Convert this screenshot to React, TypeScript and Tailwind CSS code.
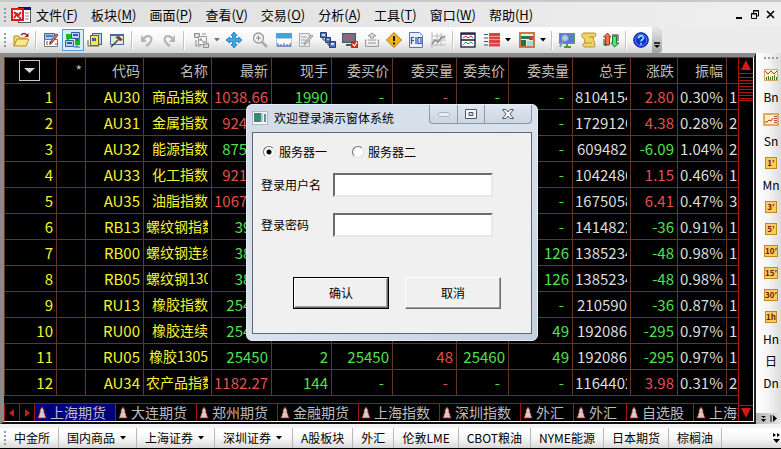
import { useState, type ReactNode } from 'react';
import clsx from 'clsx';

const COLUMNS = [
  { key: 'no', title: '', width: 'w-[52px]' },
  { key: 'mark', title: '*', width: 'w-[29px]' },
  { key: 'code', title: '代码', width: 'w-[58px]' },
  { key: 'name', title: '名称', width: 'w-[68px]' },
  { key: 'last', title: '最新', width: 'w-[60px]' },
  { key: 'hand', title: '现手', width: 'w-[60px]' },
  { key: 'bid', title: '委买价', width: 'w-[61px]' },
  { key: 'bidVol', title: '委买量', width: 'w-[64px]' },
  { key: 'ask', title: '委卖价', width: 'w-[52px]' },
  { key: 'askVol', title: '委卖量', width: 'w-[64px]' },
  { key: 'total', title: '总手', width: 'w-[58px]' },
  { key: 'change', title: '涨跌', width: 'w-[47px]' },
  { key: 'swing', title: '振幅', width: 'w-[49px]' },
  { key: 'more', title: '', width: '' },
];

// code, name, last, hand, bid, bidVol, ask, askVol, total, change, swing, more
const ROWS: string[][] = [
  ['AU30', '商品指数', '1038.66', '1990', '-', '-', '-', '-', '8104154', '2.80', '0.30%', '1'],
  ['AU31', '金属指数', '924.35', '512', '-', '-', '-', '-', '1729126', '4.38', '0.28%', '2'],
  ['AU32', '能源指数', '875.20', '96', '-', '-', '-', '-', '609482', '-6.09', '1.04%', '2'],
  ['AU33', '化工指数', '921.48', '388', '-', '-', '-', '-', '1042486', '1.15', '0.46%', '1'],
  ['AU35', '油脂指数', '1067.14', '260', '-', '-', '-', '-', '1675058', '6.41', '0.47%', '3'],
  ['RB13', '螺纹钢指数', '3958', '18', '-', '-', '-', '-', '1414822', '-36', '0.91%', '1'],
  ['RB00', '螺纹钢连续', '3886', '18', '3885', '60', '3886', '126', '1385234', '-48', '0.98%', '1'],
  ['RB05', '螺纹钢1305', '3886', '18', '3885', '60', '3886', '126', '1385234', '-48', '0.98%', '1'],
  ['RU13', '橡胶指数', '25486', '2', '-', '-', '-', '-', '210590', '-36', '0.87%', '1'],
  ['RU00', '橡胶连续', '25450', '2', '25450', '48', '25460', '49', '192086', '-295', '0.97%', '1'],
  ['RU05', '橡胶1305', '25450', '2', '25450', '48', '25460', '49', '192086', '-295', '0.97%', '1'],
  ['AU34', '农产品指数', '1182.27', '144', '-', '-', '-', '-', '1164402', '3.98', '0.31%', '2'],
];

const MENUS = [
  ['文件', 'F'],
  ['板块', 'M'],
  ['画面', 'P'],
  ['查看', 'V'],
  ['交易', 'O'],
  ['分析', 'A'],
  ['工具', 'T'],
  ['窗口', 'W'],
  ['帮助', 'H'],
];

const TABS = ['上海期货', '大连期货', '郑州期货', '金融期货', '上海指数', '深圳指数', '外汇', '外汇', '自选股', '上海期权'];

const MARKETS = [
  { name: '中金所' },
  { name: '国内商品', menu: true },
  { name: '上海证券', menu: true },
  { name: '深圳证券', menu: true },
  { name: 'A股板块' },
  { name: '外汇' },
  { name: '伦敦LME' },
  { name: 'CBOT粮油' },
  { name: 'NYME能源' },
  { name: '日本期货' },
  { name: '棕榈油' },
];

const PERIODS = ['Bn', 'trend', 'Sn', '1′', 'Mn', '3′', '5′', '10′', '15′', '30′', '1h', 'Hn', '日', 'Dn'];

function cellColor(key: string, value: string, up: boolean) {
  if (key === 'code' || key === 'name') return 'text-[#f4f42c]';
  if (key === 'total' || key === 'swing' || key === 'more') return 'text-[#dcdcdc]';
  if (key === 'bidVol') return 'text-[#e05050]';
  if (key === 'change') return value.startsWith('-') ? 'text-[#50e050]' : 'text-[#e05050]';
  if (key === 'last') return up ? 'text-[#e05050]' : 'text-[#50e050]';
  return 'text-[#50e050]';
}

export default function App() {
  return (
    <div className="relative w-full overflow-hidden bg-[#ececec] font-['Noto_Sans_CJK_SC',sans-serif] text-black">
      <MenuBar />
      <Toolbar />
      <div className="flex">
        <main className="min-w-0 flex-1 border-t-4 border-r-2 border-b-2 border-l-4 border-t-[#8a8a8a] border-r-[#222] border-b-[#111] border-l-[#8a8a8a] bg-white pr-px pb-px">
          <div className="flex bg-black">
            <div className="min-w-0 flex-1">
              <QuoteTable />
              <SectorTabs />
            </div>
            <ScrollStrip />
          </div>
        </main>
        <PeriodBar />
      </div>
      <MarketBar />
      <LoginDialog />
    </div>
  );
}

function MenuBar() {
  return (
    <header className="flex h-[27px] items-center border-t-2 border-[#c8c8c8] bg-linear-to-r from-[#dedede] to-[#efefef] pr-[6px] pl-1 text-[13px] leading-5">
      <Grip />
      <svg className="mr-[5px] ml-1 shrink-0" width="20" height="18" viewBox="0 0 20 18" aria-hidden="true">
        <rect x="7.5" y="1.5" width="12" height="15" fill="#fff" stroke="#555" />
        <rect x="7" y="1" width="13" height="3" fill="#101080" />
        <path d="M14 7h4M14 10h4M14 13h4" stroke="#888" />
        <rect x="1" y="3" width="11" height="11" fill="#fff" stroke="#d81c1c" strokeWidth="2" />
        <path d="M3 12l3-4 1 2 3-4M3 6l2 2M8 11l2 2" stroke="#d81c1c" strokeWidth="2" fill="none" />
      </svg>
      <nav className="flex gap-[13px]">
        {MENUS.map(([name, hotkey]) => (
          <button key={name} className="whitespace-nowrap">
            {name}(<span className="underline underline-offset-2">{hotkey}</span>)
          </button>
        ))}
      </nav>
      <div className="ml-auto flex items-center gap-[6px]">
        <button aria-label="最小化">
          <svg width="9" height="9" viewBox="0 0 9 9">
            <path d="M1 8h6" stroke="#000" strokeWidth="2" />
          </svg>
        </button>
        <button aria-label="还原">
          <svg width="10" height="9" viewBox="0 0 10 9" fill="none" stroke="#000">
            <path d="M3.500 3V.5h5V6H7M3 1h6M1 4h6" />
            <path d="M1.500 3.500h5v5h-5z" />
          </svg>
        </button>
        <button aria-label="关闭">
          <svg width="9" height="9" viewBox="0 0 9 9">
            <path d="M1 1l7 7M8 1L1 8" stroke="#000" strokeWidth="1.600" />
          </svg>
        </button>
      </div>
    </header>
  );
}

function Grip() {
  return (
    <svg className="shrink-0" width="3" height="14" viewBox="0 0 3 14" aria-hidden="true">
      <path d="M0 1h2M0 5h2M0 9h2M0 13h2" stroke="#9a9a9a" strokeWidth="2" />
    </svg>
  );
}

function Tool({ label, active, children }: { label: string; active?: boolean; children: ReactNode }) {
  return (
    <button
      aria-label={label}
      className={clsx(
        'flex size-[22px] shrink-0 items-center justify-center',
        active && 'border border-[#4f9be0] bg-[#d9ecfb]'
      )}
    >
      <svg className="shrink-0" width="16" height="16" viewBox="0 0 16 16" fill="none">
        {children}
      </svg>
    </button>
  );
}

function Divider() {
  return <span className="mx-[3px] h-[19px] w-[2px] shrink-0 border-r border-white bg-[#c4c4c4]" />;
}

function Drop({ dim }: { dim?: boolean }) {
  return (
    <svg className="shrink-0" width="10" height="6" viewBox="0 0 10 6" aria-hidden="true">
      <path d="M2 1h6L5 4.500z" fill={dim ? '#777' : '#000'} />
    </svg>
  );
}

function Toolbar() {
  return (
    <div className="flex h-[26px]">
      <div className="flex items-center bg-linear-to-b from-white via-[#f6f6f6] to-[#d6d6d6] pl-1" role="toolbar">
        <Grip />
        <span className="w-[3px]" />
        <Tool label="打开">
          <path d="M1 14V4h5l1 2h6v2" fill="#f6dc6c" stroke="#b98a1c" />
          <path d="M1 14l3-7h12l-3 7z" fill="#fbe88c" stroke="#b98a1c" />
          <path d="M8 3c2-2 4-2 6 0" stroke="#9c2020" strokeWidth="1.300" />
          <path d="M15.500 1v4h-4z" fill="#9c2020" />
        </Tool>
        <Divider />
        <Tool label="编辑板块">
          <path d="M1.500 1.500h10v6h-10z" fill="#a8c8ec" stroke="#44608c" />
          <path d="M3 3h7v2H3z" fill="#4c80c4" />
          <path d="M1.500 7.500h13v7h-13z" fill="#fff" stroke="#777" />
          <path d="M3 10h2M3 12h2M6 10h2M6 12h2M12 12h2" stroke="#555" />
          <path d="M15 3l-6 8-2 1 .5-2L13 2z" fill="#d88478" stroke="#8c3434" />
        </Tool>
        <Tool label="多窗口" active>
          <path d="M1 2h5v5H1zM10 7h5v6h-5z" fill="#18b828" />
          <path d="M3 7v4h4M9 6h3v3" stroke="#147820" strokeWidth="1.500" />
          <path d="M6.500.500h8v6h-8zM.5 8.500h8v6h-8z" fill="#b8d4f4" stroke="#3c5c9c" />
          <path d="M8 3h5M2 11h5" stroke="#3c5c9c" strokeWidth="2" />
          <path d="M9 15h6M12 13v2" stroke="#3c5c9c" />
        </Tool>
        <Tool label="页面">
          <rect x="5.500" y="1.500" width="9" height="11" fill="#bcd0f0" stroke="#4a5f8c" />
          <rect x="3.500" y="3.500" width="8" height="10" fill="#f2e45c" stroke="#6c6420" />
          <rect x="5" y="6" width="4" height="3" fill="#3c64a8" />
          <path d="M1 8v6h11" stroke="#666" />
        </Tool>
        <Tool label="画面工具">
          <rect x="1.500" y="2.500" width="13" height="10" fill="#e4ecd4" stroke="#4a6a9c" />
          <path d="M1 3h14" stroke="#4a6a9c" strokeWidth="2" />
          <path d="M6 5l4-1 4 4-3 1z" fill="#7c3838" />
          <path d="M9 8l-7 7" stroke="#444" strokeWidth="1.500" />
        </Tool>
        <Divider />
        <Tool label="撤销">
          <path d="M4 7c4-5 10-3 8 2-1 2-3 4-5 5" stroke="#b4b4b4" strokeWidth="2.200" />
          <path d="M2 3v7h6z" fill="#b4b4b4" />
        </Tool>
        <Tool label="重做">
          <path d="M12 7C8 2 2 4 4 9c1 2 3 4 5 5" stroke="#b4b4b4" strokeWidth="2.200" />
          <path d="M14 3v7H8z" fill="#b4b4b4" />
        </Tool>
        <Divider />
        <span className="w-[2px]" />
        <Tool label="布局">
          <path d="M1.500 1.500h5v4h-5zM10.500 11.500h5v4h-5z" fill="#ddd" stroke="#8c8c8c" />
          <path d="M5.500 4.500h8v8h-8z" fill="#f4f4f4" stroke="#999" />
          <path d="M7 7l5 4M7 9V7h2M12 9v2h-2M3 8v6h5M9 2h4" stroke="#8c8c8c" />
        </Tool>
        <Drop dim />
        <span className="w-px" />
        <Tool label="移动">
          <path
            d="M8 0l3 3.500H9.500v3h3V5L16 8l-3.500 3V9.500h-3v3H11L8 16l-3-3.500h1.500v-3h-3V11L0 8l3.500-3v1.500h3v-3H5z"
            fill="#3cabe8"
            stroke="#1c74b4"
            strokeWidth=".8"
          />
        </Tool>
        <span className="w-1" />
        <Tool label="放大">
          <circle cx="6.500" cy="6" r="5" fill="#f4f4f4" stroke="#999" strokeWidth="1.300" />
          <path d="M4 6h5M6.500 3.500v5" stroke="#888" />
          <path d="M10 10l5 5" stroke="#aaa" strokeWidth="2.500" />
        </Tool>
        <span className="w-[2px]" />
        <Tool label="标尺">
          <rect x="0" y="1" width="16" height="5" fill="#38a8e0" />
          <rect x=".5" y="6.500" width="15" height="8" fill="#fff" stroke="#b8c4e0" />
          <path d="M1 14h14M2 11v3M5 12v2M8 11v3M11 12v2M14 11v3" stroke="#4058b0" />
        </Tool>
        <Tool label="备注">
          <path d="M1.500 1.500h10v13h-10z" fill="#ececec" stroke="#aaa" />
          <path d="M3 5h6M3 8h5M3 11h4" stroke="#aaa" />
          <path d="M15 4l-7 8-2 1 1-3 6-7z" fill="#ccc" stroke="#999" />
        </Tool>
        <Tool label="层叠">
          <path d="M.5.500h6v5h-6zM5.500 5.500h5v5h-5zM9.500 9.500h6v6h-6z" fill="#4c74c8" stroke="#283c78" />
          <path d="M2 2h3v2H2zM7 7h2v1H7zM11 11h3v2h-3z" fill="#c8dcfc" />
          <path d="M3 6v2h2M8 11v2h1" stroke="#444" />
        </Tool>
        <Tool label="行情监控">
          <rect x=".5" y="1.500" width="13" height="9" fill="#6c7488" stroke="#4c5468" />
          <path d="M2 8l3-2 2 1 2-3 4-1" stroke="#e84848" />
          <path d="M4 13h5" stroke="#555" strokeWidth="2" />
          <rect x="9" y="9" width="7" height="7" fill="#e02020" />
          <path d="M10.500 12l2 2 2.500-4" stroke="#fff" strokeWidth="1.200" />
        </Tool>
        <Tool label="上传">
          <path d="M4 4l4-3 4 3H9.500v2h-3V4z" fill="#ddd" stroke="#999" />
          <path d="M3 8H1.500v6.500h13V8H13M4 8h8M4 11h8" stroke="#999" />
        </Tool>
        <Tool label="预警">
          <path d="M8 .5L15.500 8 8 15.500.5 8z" fill="#f4b41c" stroke="#a87410" />
          <path d="M8 4v5M8 10.500v2" stroke="#221800" strokeWidth="2" />
        </Tool>
        <Tool label="F10资料">
          <path d="M1.500.500h10l3 3v12h-13z" fill="#e8f0fc" stroke="#5c74b0" />
          <path d="M3.500 12V5.500H6M3.500 8.500H6M8 5v7M10 5.500h3v6h-3z" stroke="#2c4ca8" strokeWidth="1.200" />
        </Tool>
        <Tool label="走势对比">
          <path d="M2 0v16M0 13h16M2 4h14M2 8h14M7 1v13M11 1v13" stroke="#bbb" />
          <path d="M2 12l3-4 3 2 3-4 4-1" stroke="#888" strokeWidth="1.500" />
        </Tool>
        <Divider />
        <Tool label="分时图">
          <rect x="1" y="1" width="14" height="14" fill="#fff" stroke="#14143c" strokeWidth="1.300" />
          <path d="M1 2h14M1 8h14" stroke="#14143c" strokeWidth="1.500" />
          <path d="M3 6l3-2 2 2 3-2 2 2" stroke="#d02828" />
          <path d="M3 13l3-3 2 2 3-2 2 2" stroke="#28a048" />
        </Tool>
        <span className="w-[2px]" />
        <Tool label="报价列表">
          <path d="M5 2.500h11M5 6h11M5 9.500h11M5 13h11" stroke="#d84444" strokeWidth="3" />
          <path d="M0 2.500h4M0 6h4M0 9.500h4M0 13h4" stroke="#44507c" />
        </Tool>
        <Drop />
        <span className="w-[3px]" />
        <Tool label="版面">
          <rect x="1" y="1" width="14" height="14" fill="#f8e8dc" stroke="#c47c4c" strokeWidth="2" />
          <path d="M2 4h8v3H2z" fill="#1c7c4c" />
          <path d="M10 4h4v4h-4z" fill="#c83838" />
          <path d="M2 8h5v6H2z" fill="#286c60" />
          <path d="M8 9h6v5H8z" fill="#a4d4f0" />
        </Tool>
        <Drop />
        <Divider />
        <Tool label="远程">
          <rect x=".5" y="1.500" width="15" height="10" fill="#5c78d8" stroke="#54a454" />
          <path d="M5 15h7M8 12v3" stroke="#48984c" strokeWidth="2" />
          <circle cx="6" cy="6" r="3.500" fill="#b4c8ec" stroke="#7888a8" />
          <path d="M4 9l-3 6" stroke="#8898b0" strokeWidth="2" />
        </Tool>
        <Tool label="脚本">
          <path d="M3 1h10c3 0 2 4 0 4h-1l2 9c0 1-1 1-2 1H4c-3 0-3-4 0-4L3 6C0 6 0 1 3 1z" fill="#f0d468" stroke="#b49430" />
          <path d="M4 11h7M12 5H8" stroke="#b49430" />
        </Tool>
        <Tool label="买卖">
          <path d="M4.500 1L8 5H6.500v8h-4V5H.5z" fill="#f07448" stroke="#a03818" />
          <path d="M11.500 15L8 11h1.500V4h4v7H16z" fill="#58e07c" stroke="#187834" />
          <path d="M1 7v6h3M9 3h6v6" stroke="#333" />
        </Tool>
        <Divider />
        <Tool label="帮助">
          <circle cx="8" cy="8" r="7.300" fill="#1030d8" stroke="#0818a0" />
          <circle cx="8" cy="8" r="5.800" stroke="#88a4fc" strokeWidth=".7" />
          <path d="M5.500 6.500c0-3.500 5-3.500 5-.5 0 1.500-2.500 1.500-2.500 3.500M8 11v1.800" stroke="#8ce8f8" strokeWidth="1.700" />
        </Tool>
        <button
          aria-label="工具栏选项"
          className="flex h-full w-[10px] items-end justify-center rounded-r-sm bg-linear-to-b from-[#e8e8e8] to-[#a4a4a4] pb-1"
        >
          <svg width="6" height="7" viewBox="0 0 6 7">
            <path d="M0 1h6" stroke="#000" strokeWidth="1.500" />
            <path d="M0 3h6L3 6z" fill="#000" />
          </svg>
        </button>
      </div>
    </div>
  );
}

function QuoteTable() {
  return (
    <table className="w-full table-fixed border-separate border-spacing-0 border-t border-l border-[#643624] text-right text-[15px] leading-[25px]">
      <colgroup>
        {COLUMNS.map((col) => (
          <col key={col.key} className={col.width} />
        ))}
      </colgroup>
      <thead>
        <tr className="h-[26px] text-[14px] text-[#bcbcbc]">
          {COLUMNS.map((col) => (
            <th
              key={col.key}
              className="border-r border-b border-[#643624] p-0 pr-[3px] font-normal whitespace-nowrap last:border-r-0"
            >
              {col.key === 'no' ? (
                <button
                  aria-label="选择板块"
                  className="mx-auto flex size-[21px] items-center justify-center border border-[#c8c8c8]"
                >
                  <svg width="11" height="6" viewBox="0 0 11 6">
                    <path d="M0 0h11L5.500 5z" fill="#d8d8d8" />
                  </svg>
                </button>
              ) : (
                col.title
              )}
            </th>
          ))}
        </tr>
      </thead>
      <tbody>
        {ROWS.map((row, i) => {
          const up = row[2].includes('.') && row[0] !== 'AU32';
          return (
            <tr key={row[0]} className="h-[26px]">
              <td className="border-r border-b border-[#643624] p-0 pr-[3px] text-[#f4f42c]">{i + 1}</td>
              <td className="border-r border-b border-[#643624] p-0" />
              {row.map((value, j) => {
                const key = COLUMNS[j + 2].key;
                return (
                  <td
                    key={key}
                    className={clsx(
                      'border-b border-[#643624] p-0 pl-[2px]',
                      key === 'more' ? 'text-left' : 'border-r',
                      key !== 'more' && (value === '-' ? 'pr-2' : 'pr-[3px]'),
                      key === 'name' && 'text-[14px]',
                      cellColor(key, value, up)
                    )}
                  >
                    <div className="overflow-hidden whitespace-nowrap">{value}</div>
                  </td>
                );
              })}
            </tr>
          );
        })}
      </tbody>
    </table>
  );
}

function SectorTabs() {
  const [current, setCurrent] = useState(0);
  return (
    <div className="mt-[7px] flex h-[18px] overflow-hidden border-t border-[#a01414] text-[14px] leading-[17px] text-[#bcbcbc]">
      <button aria-label="向左" className="flex w-[15px] shrink-0 items-center justify-center border-l border-[#a01414]">
        <svg width="6" height="8" viewBox="0 0 6 8">
          <path d="M5 0v8L0 4z" fill="#d01818" />
        </svg>
      </button>
      <button aria-label="向右" className="flex w-[15px] shrink-0 items-center justify-center border-l border-[#a01414]">
        <svg width="6" height="8" viewBox="0 0 6 8">
          <path d="M1 0v8l5-4z" fill="#d01818" />
        </svg>
      </button>
      {TABS.map((tab, i) => (
        <button
          key={i}
          onClick={() => setCurrent(i)}
          className={clsx(
            'flex shrink-0 items-center gap-[3px] border-l border-[#a01414] pr-[9px] pl-[2px] whitespace-nowrap',
            i === current && 'bg-[#00007c]'
          )}
        >
          <svg width="10" height="13" viewBox="0 0 10 13" aria-hidden="true">
            <path d="M5 1l2 3v3l1 1v2l1 1v1H1v-1l1-1V8l1-1V4z" fill="#d4ccc8" stroke="#a82020" strokeWidth=".8" />
          </svg>
          {tab}
        </button>
      ))}
    </div>
  );
}

function ScrollStrip() {
  return (
    <div className="flex w-[15px] shrink-0 flex-col items-center justify-between border-t border-l border-[#b01414]">
      <svg width="14" height="46" viewBox="0 0 14 46" aria-hidden="true">
        <path d="M7 2l5 10H2z" fill="#d01818" />
        <path
          d="M0 15.500h14M0 19.500h14M0 22.500h14M0 25.500h14M0 28.500h14M0 31.500h14M0 34.500h14M0 37.500h14M0 40.500h14M0 42.500h14"
          stroke="#b01414"
        />
      </svg>
      <svg width="14" height="16" viewBox="0 0 14 16" aria-hidden="true">
        <path d="M0 .5h14" stroke="#b01414" />
        <path d="M2 3h10L7 13z" fill="#d01818" />
      </svg>
    </div>
  );
}

function PeriodBar() {
  return (
    <aside className="flex w-[25px] shrink-0 flex-col bg-linear-to-r from-white via-[#f4f4f4] to-[#dcdcdc] text-[12px] leading-[22px]">
      <div className="flex flex-col items-center pl-[5px]">
        <svg className="mt-1 mb-[5px] shrink-0" width="16" height="2" viewBox="0 0 16 2" aria-hidden="true">
          <path d="M1 1h2M5 1h2M9 1h2M13 1h2" stroke="#999" strokeWidth="2" />
        </svg>
        <button aria-label="K线" className="flex h-[22px] items-center">
          <svg width="14" height="12" viewBox="0 0 14 12" fill="none">
            <rect x=".5" y=".5" width="13" height="11" fill="#fcf0cc" stroke="#d8a860" />
            <path d="M1 2l3 3 3-3 3 3 3-3" stroke="#b83030" />
            <path d="M2.500 11V8M4.500 11V7M6.500 11V8M8.500 11V7M10.500 11V6M12.500 11V8" stroke="#407820" />
          </svg>
        </button>
        {PERIODS.map((period) => {
          if (period === 'trend') {
            return (
              <button key={period} aria-label="走势" className="flex h-[22px] items-center">
                <svg width="16" height="13" viewBox="0 0 16 13" fill="none">
                  <rect x="1" y="1" width="14" height="11" fill="#fcecc8" stroke="#d8943c" strokeWidth="1.500" />
                  <path d="M2 9h2l2-2 2 1 2-3" stroke="#c83030" />
                  <path d="M11 3.500h3M11 5.500h3M11 7.500h3M11 9.500h3" stroke="#b04848" />
                </svg>
              </button>
            );
          }
          const boxed = /^\d/.test(period);
          return (
            <button key={period} className="flex h-[22px] items-center">
              {boxed ? (
                <span className="min-w-[12px] border border-[#c08820] bg-[#fccc60] text-center text-[8px] leading-[10px] font-bold text-[#6c1c08]">
                  {period}
                </span>
              ) : (
                period
              )}
            </button>
          );
        })}
      </div>
      <button
        aria-label="更多周期"
        className="mt-auto flex h-[11px] w-full items-center justify-center bg-linear-to-r from-[#b4b4b4] to-[#e4e4e4]"
      >
        <svg width="16" height="7" viewBox="0 0 16 7">
          <path d="M0 1h5L2.500 3zM0 4h5L2.500 7z" fill="#000" />
          <path d="M10 0v7" stroke="#000" />
          <path d="M12 0l4 3.500L12 7z" fill="#000" />
        </svg>
      </button>
    </aside>
  );
}

function MarketBar() {
  return (
    <footer className="flex h-[25px] items-center overflow-hidden border-t-4 border-b border-t-[#f2f2f2] border-b-black bg-linear-to-b from-white via-[#f8f8f8] to-[#d8d8d8] pl-1 text-[12px] leading-5">
      <Grip />
      {MARKETS.map((market, i) => (
        <button
          key={market.name}
          className={clsx(
            'flex shrink-0 items-center gap-[3px] border-r border-[#b8b8b8] pr-2 whitespace-nowrap',
            i === 0 ? 'pl-[7px]' : 'pl-2'
          )}
        >
          {market.name}
          {market.menu && <Drop />}
        </button>
      ))}
      <svg className="mr-px ml-auto shrink-0" width="7" height="10" viewBox="0 0 7 10" aria-hidden="true">
        <path d="M0 0l3 2-3 2zM4 0l3 2-3 2zM0 6h7L3.500 10z" fill="#000" />
      </svg>
    </footer>
  );
}

function LoginDialog() {
  return (
    <div
      role="dialog"
      aria-labelledby="login-title"
      className="absolute top-[104px] left-[246px] w-[292px] rounded-md border border-[#e4edf5] bg-linear-to-br from-[#d2dce7] via-[#d9e3ed] to-[#c4d0de] px-[5px] pb-[6px] text-[12px] leading-4"
    >
      <div className="flex h-[27px] items-start">
        <svg className="mt-[6px] mr-[6px]" width="16" height="14" viewBox="0 0 16 14" aria-hidden="true">
          <rect x=".5" y=".5" width="15" height="13" fill="#f4f8f8" stroke="#b0b8c0" />
          <rect x="2" y="2" width="7" height="9" fill="#3c8878" />
          <rect x="9" y="2" width="2" height="9" fill="#a8d0c8" />
          <rect x="12" y="3" width="2" height="8" fill="#70889c" />
        </svg>
        <h1 id="login-title" className="mt-[5px]">
          欢迎登录演示窗体系统
        </h1>
        <div className="ml-auto flex h-[19px] overflow-hidden rounded-b border border-t-0 border-[#8c98a8] bg-linear-to-b from-[#dfe7ef] to-[#ccd6e1]">
          <button aria-label="最小化" disabled className="flex w-[28px] items-center justify-center border-r border-[#8c98a8]">
            <svg width="12" height="5" viewBox="0 0 12 5">
              <rect x=".5" y=".5" width="11" height="4" rx="1" fill="#e8eef4" stroke="#a8b4c0" />
            </svg>
          </button>
          <button aria-label="最大化" className="flex w-[27px] items-center justify-center border-r border-[#8c98a8]">
            <svg width="12" height="10" viewBox="0 0 12 10">
              <path d="M.5.500h11v9H.5z" fill="#f8f8f8" stroke="#505868" />
              <path d="M4 3.500h4v3H4z" fill="#c8d4e0" stroke="#505868" />
            </svg>
          </button>
          <button aria-label="关闭" className="flex w-[46px] items-center justify-center">
            <svg width="12" height="10" viewBox="0 0 12 10">
              <path d="M.5.500h3.500L6 3 8 .5h3.500L8 5l3.500 4.500H8L6 7 4 9.500H.5L4 5z" fill="#f8f8f8" stroke="#505868" />
            </svg>
          </button>
        </div>
      </div>
      <form className="border border-[#5c6874] bg-[#f0f0f0] pt-[11px] pb-[24px]" onSubmit={(e) => e.preventDefault()}>
        <div className="flex gap-[25px] pl-[10px]">
          <ServerOption label="服务器一" defaultChecked />
          <ServerOption label="服务器二" />
        </div>
        <div className="mt-[13px] flex flex-col gap-4 pl-2">
          <Field id="user" label="登录用户名" type="text" />
          <Field id="password" label="登录密码" type="password" />
        </div>
        <div className="mt-10 flex gap-4 pl-[40px]">
          <div className="border border-black">
            <button
              type="submit"
              className="block h-[30px] w-[94px] border border-t-white border-r-[#696969] border-b-[#696969] border-l-white shadow-[inset_-1px_-1px_0_#a0a0a0]"
            >
              确认
            </button>
          </div>
          <button
            type="button"
            className="h-[32px] w-[96px] border border-t-white border-r-[#696969] border-b-[#696969] border-l-white shadow-[inset_-1px_-1px_0_#a0a0a0]"
          >
            取消
          </button>
        </div>
      </form>
    </div>
  );
}

function ServerOption({ label, defaultChecked }: { label: string; defaultChecked?: boolean }) {
  return (
    <label className="flex items-center gap-1">
      <input
        type="radio"
        name="server"
        defaultChecked={defaultChecked}
        className="size-3 appearance-none rounded-full border border-t-[#707070] border-r-[#e0e0e0] border-b-[#e0e0e0] border-l-[#707070] bg-white checked:bg-[radial-gradient(circle,#000_2px,#fff_3px)]"
      />
      {label}
    </label>
  );
}

function Field({ id, label, type }: { id: string; label: string; type: string }) {
  return (
    <div className="flex items-center">
      <label htmlFor={id} className="w-[72px]">
        {label}
      </label>
      <input
        id={id}
        type={type}
        className="h-6 w-[160px] border-2 border-t-[#6c6c6c] border-r-[#e8e8e8] border-b-[#e8e8e8] border-l-[#6c6c6c] bg-white px-1 outline-none"
      />
    </div>
  );
}
